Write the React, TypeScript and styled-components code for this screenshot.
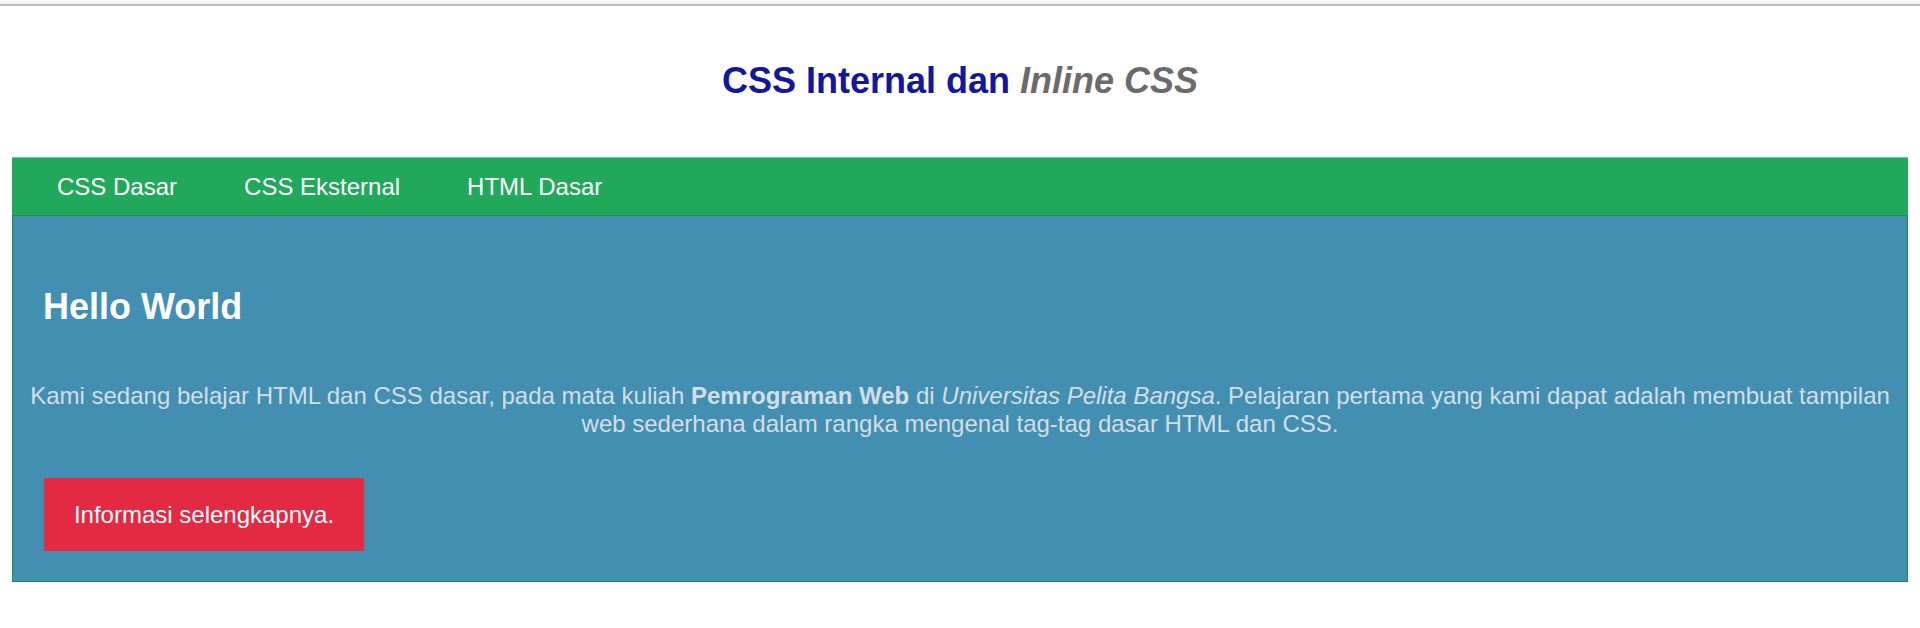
import React from "react";
import styled, { createGlobalStyle } from "styled-components";

const GlobalStyle = createGlobalStyle`
  html, body {
    margin: 0;
    padding: 0;
    background: #ffffff;
    font-family: "Liberation Sans", Arial, sans-serif;
  }
`;

const TopStrip = styled.div`
  height: 4px;
  background: linear-gradient(#fafafa, #eeeeee);
  border-bottom: 2px solid #bdbdbd;
`;

const Page = styled.div`
  padding: 0 12px;
`;

const Header = styled.header`
  height: 151px;
  display: flex;
  align-items: flex-start;
  justify-content: center;
`;

const Title = styled.h1`
  margin: 54px 0 0;
  font-size: 36px;
  font-weight: bold;
  color: #14169c;
  line-height: 41px;
`;

const Accent = styled.em`
  color: #6b6b6b;
`;

const Frame = styled.div`
  border: 1px solid #1b8f4c;
  border-top: none;
`;

const Nav = styled.nav`
  height: 57px;
  background: #22a85a;
  border-top: 1px solid #6cbfd8;
  border-bottom: 1px solid #1b8f4c;
  margin: 0 -1px;
  display: flex;
  align-items: center;
  gap: 67px;
  padding-left: 45px;
`;

const NavLink = styled.a`
  color: #ffffff;
  font-size: 24px;
  text-decoration: none;
  line-height: 28px;
`;

const Content = styled.section`
  background: #428fb2;
  padding: 70px 0 30px;
`;

const Heading = styled.h2`
  margin: 0 0 55px;
  padding-left: 30px;
  font-size: 36px;
  font-weight: bold;
  color: #ffffff;
  line-height: 41px;
`;

const Paragraph = styled.p`
  margin: 0 0 40px;
  text-align: center;
  font-size: 24px;
  line-height: 28px;
  color: #d3dee8;
`;

const Button = styled.a`
  margin-left: 31px;
  display: inline-flex;
  align-items: center;
  justify-content: center;
  width: 320px;
  height: 73px;
  background: #e42943;
  color: #ffffff;
  font-size: 24px;
  text-decoration: none;
`;

export default function App() {
  return (
    <>
      <GlobalStyle />
      <TopStrip />
      <Page>
        <Header>
          <Title>
            CSS Internal dan <Accent>Inline CSS</Accent>
          </Title>
        </Header>
        <Frame>
          <Nav>
            <NavLink href="#">CSS Dasar</NavLink>
            <NavLink href="#">CSS Eksternal</NavLink>
            <NavLink href="#">HTML Dasar</NavLink>
          </Nav>
          <Content>
            <Heading>Hello World</Heading>
            <Paragraph>
              Kami sedang belajar HTML dan CSS dasar, pada mata kuliah{" "}
              <strong>Pemrograman Web</strong> di <em>Universitas Pelita Bangsa</em>.
              Pelajaran pertama yang kami dapat adalah membuat tampilan web sederhana
              dalam rangka mengenal tag-tag dasar HTML dan CSS.
            </Paragraph>
            <Button href="#">Informasi selengkapnya.</Button>
          </Content>
        </Frame>
      </Page>
    </>
  );
}
